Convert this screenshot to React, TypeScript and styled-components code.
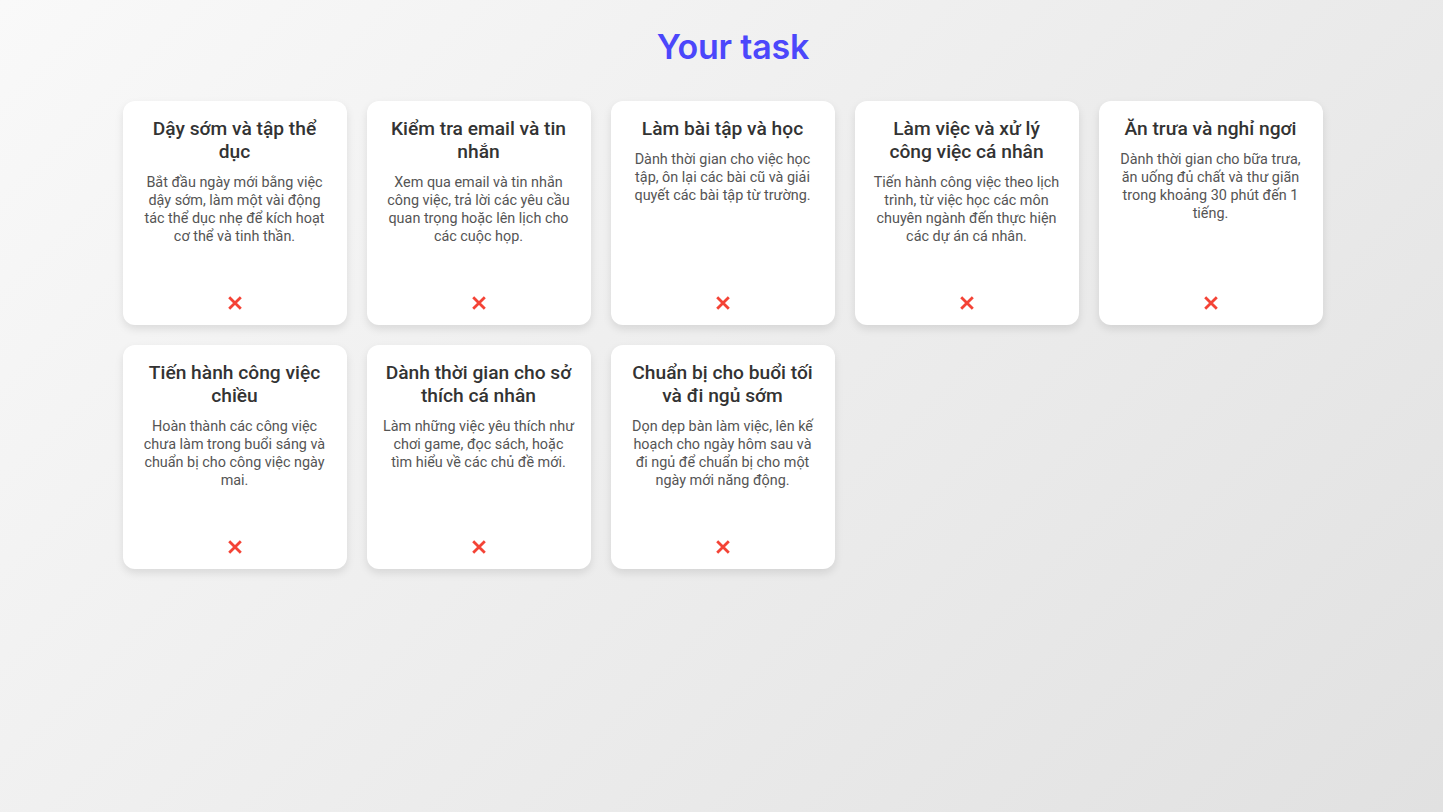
import React from "react";
import styled, { createGlobalStyle } from "styled-components";

const GlobalStyle = createGlobalStyle`
  html, body { margin: 0; padding: 0; }
  body {
    min-height: 100vh;
    background: linear-gradient(135deg, #f9f9f9 0%, #e1e1e1 100%);
    background-attachment: fixed;
    font-family: Roboto, "Liberation Sans", sans-serif;
  }
`;

const Page = styled.main`
  min-height: 100vh;
  padding-top: 26px;
  box-sizing: border-box;
`;

const Heading = styled.h1`
  margin: 0 0 34px;
  padding-left: 23px;
  text-align: center;
  font-family: Inter, "Open Sans", sans-serif;
  font-weight: 600;
  font-size: 34px;
  line-height: 41px;
  color: #4b47fb;
  letter-spacing: -0.2px;
`;

const Grid = styled.section`
  display: grid;
  grid-template-columns: repeat(5, 224px);
  grid-auto-rows: 224px;
  gap: 20px;
  justify-content: center;
  padding-left: 2px;
`;

const Card = styled.article`
  display: flex;
  flex-direction: column;
  align-items: center;
  background: #ffffff;
  border-radius: 12px;
  box-shadow: 0 4px 8px rgba(0, 0, 0, 0.1);
  padding: 16px 16px 15px;
  box-sizing: border-box;
  text-align: center;
`;

const CardTitle = styled.h3`
  margin: 0 0 11px;
  font-size: 19.2px;
  line-height: 23px;
  font-weight: 500;
  color: #333333;
`;

const CardText = styled.p`
  margin: 0;
  font-size: 14.4px;
  line-height: 18px;
  color: #555555;
`;

const RemoveButton = styled.button`
  margin-top: auto;
  border: none;
  background: none;
  padding: 0;
  width: 14px;
  height: 14px;
  display: flex;
  cursor: pointer;
  color: #f44336;
`;

const tasks = [
  {
    title: "Dậy sớm và tập thể dục",
    text: "Bắt đầu ngày mới bằng việc dậy sớm, làm một vài động tác thể dục nhẹ để kích hoạt cơ thể và tinh thần.",
  },
  {
    title: "Kiểm tra email và tin nhắn",
    text: "Xem qua email và tin nhắn công việc, trả lời các yêu cầu quan trọng hoặc lên lịch cho các cuộc họp.",
  },
  {
    title: "Làm bài tập và học",
    text: "Dành thời gian cho việc học tập, ôn lại các bài cũ và giải quyết các bài tập từ trường.",
  },
  {
    title: "Làm việc và xử lý công việc cá nhân",
    text: "Tiến hành công việc theo lịch trình, từ việc học các môn chuyên ngành đến thực hiện các dự án cá nhân.",
  },
  {
    title: "Ăn trưa và nghỉ ngơi",
    text: "Dành thời gian cho bữa trưa, ăn uống đủ chất và thư giãn trong khoảng 30 phút đến 1 tiếng.",
  },
  {
    title: "Tiến hành công việc chiều",
    text: "Hoàn thành các công việc chưa làm trong buổi sáng và chuẩn bị cho công việc ngày mai.",
  },
  {
    title: "Dành thời gian cho sở thích cá nhân",
    text: "Làm những việc yêu thích như chơi game, đọc sách, hoặc tìm hiểu về các chủ đề mới.",
  },
  {
    title: "Chuẩn bị cho buổi tối và đi ngủ sớm",
    text: "Dọn dẹp bàn làm việc, lên kế hoạch cho ngày hôm sau và đi ngủ để chuẩn bị cho một ngày mới năng động.",
  },
];

const CrossIcon = () => (
  <svg width="14" height="14" viewBox="0 0 14 14" aria-hidden="true">
    <path
      d="M1.2 1.2 L12.8 12.8 M12.8 1.2 L1.2 12.8"
      stroke="currentColor"
      strokeWidth="2.8"
      strokeLinecap="butt"
      fill="none"
    />
  </svg>
);

export default function App() {
  return (
    <>
      <GlobalStyle />
      <Page>
        <Heading>Your task</Heading>
        <Grid>
          {tasks.map((t) => (
            <Card key={t.title}>
              <CardTitle>{t.title}</CardTitle>
              <CardText>{t.text}</CardText>
              <RemoveButton aria-label="Remove task">
                <CrossIcon />
              </RemoveButton>
            </Card>
          ))}
        </Grid>
      </Page>
    </>
  );
}
